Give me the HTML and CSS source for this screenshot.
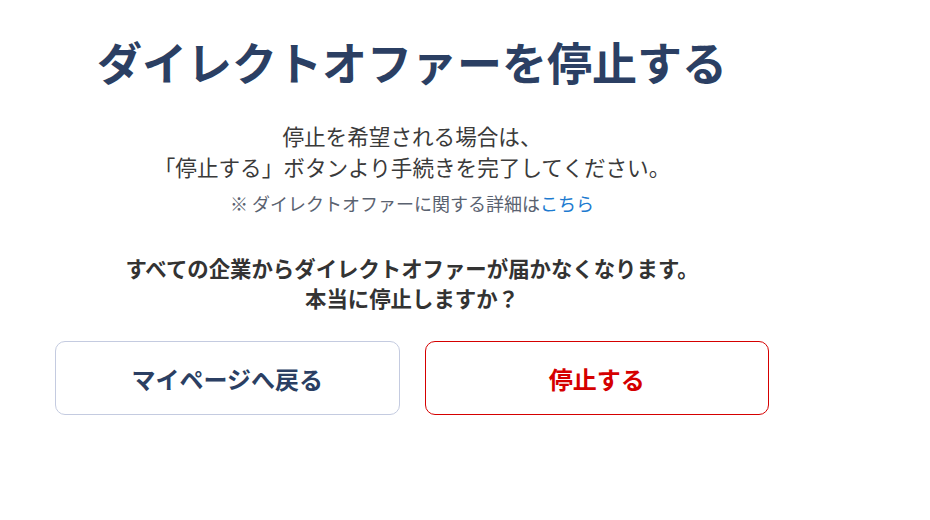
FILE: index.html
```html
<!DOCTYPE html>
<html lang="ja">
<head>
  <meta charset="UTF-8" />
  <meta name="viewport" content="width=device-width, initial-scale=1" />
  <title>ダイレクトオファーを停止する</title>
  <link rel="stylesheet" href="styles.css">
</head>
<body>
  <main class="stop-offer">
    <h1 class="stop-offer__title">ダイレクトオファーを停止する</h1>
    <p class="stop-offer__lead">停止を希望される場合は、<br>「停止する」ボタンより手続きを完了してください。</p>
    <p class="stop-offer__note">※ ダイレクトオファーに関する詳細は<a href="#">こちら</a></p>
    <p class="stop-offer__confirm">すべての企業からダイレクトオファーが届かなくなります。<br>本当に停止しますか？</p>
    <div class="stop-offer__actions">
      <a class="btn btn--back" href="#">マイページへ戻る</a>
      <button class="btn btn--stop" type="button">停止する</button>
    </div>
  </main>
</body>
</html>
```

FILE: styles.css
```css
body {
  margin: 0;
  background: #fff;
  font-family: "Noto Sans CJK JP", "Noto Sans", sans-serif;
  color: #333;
}

.stop-offer {
  width: 714px;
  margin-left: 55px;
  padding-top: 27px;
  text-align: center;
}

.stop-offer__title {
  margin: 0;
  font-size: 45px;
  line-height: 70px;
  font-weight: bold;
  color: #2b3f63;
}

.stop-offer__lead {
  margin: 23px 0 0;
  font-size: 21.6px;
  line-height: 31px;
  color: #3a3a3a;
}

.stop-offer__note {
  margin: 8px 0 0;
  font-size: 18px;
  line-height: 26px;
  color: #5a6270;
}

.stop-offer__note a {
  color: #1d7bd0;
  text-decoration: none;
}

.stop-offer__confirm {
  margin: 37px 0 0;
  font-size: 21.4px;
  line-height: 30px;
  font-weight: bold;
  color: #333;
}

.stop-offer__actions {
  display: flex;
  gap: 25px;
  margin-top: 28px;
}

.btn {
  flex: 1 1 0;
  width: 0;
  height: 74px;
  padding: 0;
  display: flex;
  align-items: center;
  justify-content: center;
  box-sizing: border-box;
  border-radius: 10px;
  background: #fff;
  font-family: inherit;
  font-size: 24px;
  font-weight: bold;
  text-decoration: none;
  cursor: pointer;
}

.btn--back {
  border: 1px solid #c4cbe0;
  color: #2b3f63;
}

.btn--stop {
  border: 1px solid #d50000;
  color: #d50000;
}
```
